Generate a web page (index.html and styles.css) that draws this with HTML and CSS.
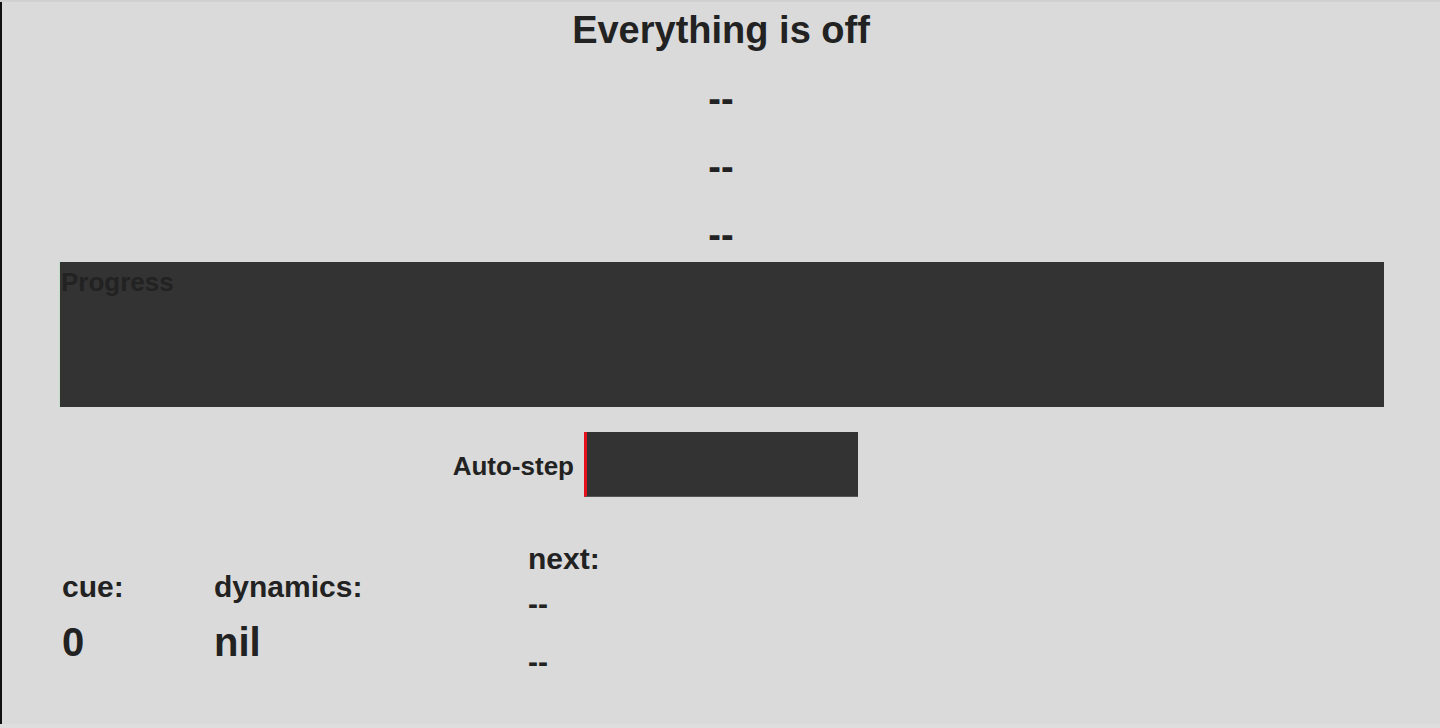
FILE: index.html
```html
<!DOCTYPE html>
<html lang="en">
<head>
<meta charset="utf-8">
<title>Everything is off</title>
<link rel="stylesheet" href="styles.css">
</head>
<body>
<div class="app">
  <h1 class="title">Everything is off</h1>
  <div class="status status-first">--</div>
  <div class="status">--</div>
  <div class="status">--</div>
  <div class="progress">
    <span class="progress-label">Progress</span>
  </div>
  <div class="autostep">
    <span class="autostep-label">Auto-step</span>
    <div class="autostep-box"></div>
  </div>
  <div class="info">
    <div class="info-col col-cue">
      <div class="info-label">cue:</div>
      <div class="info-value">0</div>
    </div>
    <div class="info-col col-dyn">
      <div class="info-label">dynamics:</div>
      <div class="info-value">nil</div>
    </div>
    <div class="info-col col-next">
      <div class="info-label">next:</div>
      <div class="next-item next-first">--</div>
      <div class="next-item next-second">--</div>
    </div>
  </div>
</div>
</body>
</html>
```

FILE: styles.css
```css
html, body {
  margin: 0;
  padding: 0;
}

body {
  background: #dedede;
  border-top: 2px solid #d0d0d0;
  font-family: "Liberation Sans", Arial, sans-serif;
  color: #222;
}

.app {
  height: 722px;
  box-sizing: border-box;
  background: #dadada;
  border-left: 2px solid #111;
  display: flex;
  flex-direction: column;
  overflow: hidden;
}

.title {
  margin: 6px 0 0;
  font-size: 38px;
  line-height: 44px;
  font-weight: bold;
  text-align: center;
}

.status {
  font-size: 38px;
  line-height: 44px;
  font-weight: bold;
  text-align: center;
  margin-top: 24px;
}

.status-first {
  margin-top: 25px;
}

.progress {
  margin: 5px 56px 0 57px;
  height: 145px;
  box-sizing: border-box;
  background: #333;
  border-left: 1px solid #c3dfc3;
  padding: 5px 0 0 1px;
}

.progress-label {
  font-size: 26px;
  font-weight: bold;
  color: #222;
}

.autostep {
  margin-top: 25px;
  display: grid;
  grid-template-columns: 1fr auto 1fr;
  align-items: center;
}

.autostep-label {
  justify-self: end;
  font-size: 26px;
  font-weight: bold;
  margin: 4px 10px 0 0;
}

.autostep-box {
  width: 274px;
  height: 65px;
  box-sizing: border-box;
  background: #333;
  border-left: 3px solid #e5101b;
  border-bottom: 1px solid #555;
}

.info {
  margin-top: 45px;
  padding-left: 60px;
  display: flex;
  align-items: flex-start;
}

.info-col {
  display: flex;
  flex-direction: column;
}

.col-cue {
  width: 152px;
  margin-top: 28px;
}

.col-dyn {
  width: 314px;
  margin-top: 28px;
}

.info-label,
.next-item {
  font-size: 30px;
  line-height: 34.5px;
  font-weight: bold;
}

.info-value {
  font-size: 40px;
  line-height: 46px;
  font-weight: bold;
  margin-top: 14px;
}

.next-first {
  margin-top: 10.5px;
}

.next-second {
  margin-top: 23.5px;
}
```
